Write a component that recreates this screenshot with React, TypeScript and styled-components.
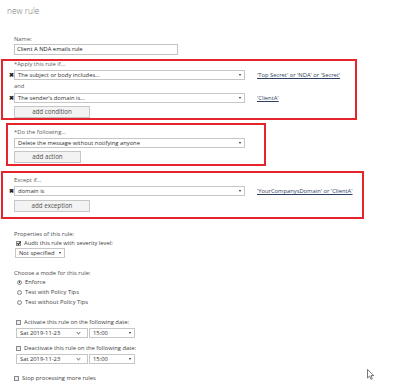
import * as React from "react";
import styled, { createGlobalStyle } from "styled-components";

const GlobalStyle = createGlobalStyle`
  html, body {
    margin: 0;
    padding: 0;
    background: #ffffff;
  }
  body {
    font-family: "Open Sans", "Noto Sans", sans-serif;
    font-size: 5.8px;
    color: #3c3c3c;
  }
`;

const Page = styled.div`
  position: relative;
  width: 400px;
  height: 386px;
  overflow: hidden;
  padding-top: 6px;
  box-sizing: border-box;
`;

const Title = styled.div`
  padding-left: 7px;
  font-size: 8.4px;
  line-height: 10px;
  color: #7a7a7a;
  font-weight: 300;
`;

const Label = styled.div<{ $top?: number }>`
  padding-left: 14px;
  margin-top: ${(p) => p.$top || 0}px;
  line-height: 8px;
  color: #5a5a5a;
`;

const TextInput = styled.div`
  margin: 1px 0 0 14px;
  width: 164px;
  height: 11px;
  box-sizing: border-box;
  border: 1px solid #c4c4c4;
  padding-left: 2px;
  line-height: 9px;
  color: #222222;
`;

const RedBox = styled.div<{ $left: number; $width: number; $top: number; $pad: number }>`
  margin: ${(p) => p.$top}px 0 0 ${(p) => p.$left}px;
  width: ${(p) => p.$width}px;
  box-sizing: border-box;
  border: 2px solid #e5242c;
  padding: 0 0 ${(p) => p.$pad}px ${(p) => 12 - p.$left}px;
`;

const BoxLabel = styled.div<{ $top?: number }>`
  margin-top: ${(p) => p.$top || 0}px;
  line-height: 7px;
  color: #5a5a5a;
`;

const CondRow = styled.div<{ $top: number }>`
  display: flex;
  align-items: center;
  margin-top: ${(p) => p.$top}px;
  margin-left: -6px;
`;

const Remove = styled.span`
  width: 6px;
  font-size: 6px;
  font-weight: 700;
  color: #222222;
  line-height: 10px;
  text-align: center;
`;

const Select = styled.div<{ $width: number; $top?: number }>`
  position: relative;
  width: ${(p) => p.$width}px;
  height: 10px;
  margin-top: ${(p) => p.$top || 0}px;
  box-sizing: border-box;
  border: 1px solid #c6c6c6;
  background: #ffffff;
  padding-left: 3px;
  line-height: 8px;
  color: #2e2e2e;
  white-space: nowrap;
`;

const Caret = styled.span`
  position: absolute;
  right: 3px;
  top: 50%;
  margin-top: -1px;
  width: 0;
  height: 0;
  border-left: 1.6px solid transparent;
  border-right: 1.6px solid transparent;
  border-top: 2.2px solid #222222;
`;

const Chevron = styled.span`
  position: absolute;
  right: 7px;
  top: 50%;
  margin-top: -2px;
  width: 2px;
  height: 2px;
  border-right: 0.8px solid #888888;
  border-bottom: 0.8px solid #888888;
  transform: rotate(45deg);
`;

const ValueLink = styled.a`
  margin-left: 12px;
  color: #2d4060;
  text-decoration: underline;
  white-space: nowrap;
`;

const Button = styled.div<{ $width: number; $top: number }>`
  margin-top: ${(p) => p.$top}px;
  width: ${(p) => p.$width}px;
  height: 12px;
  box-sizing: border-box;
  border: 1px solid #c6c6c6;
  background: #f3f3f3;
  text-align: center;
  line-height: 10px;
  font-size: 6.2px;
  color: #505050;
`;

const Section = styled.div<{ $top: number }>`
  margin-top: ${(p) => p.$top}px;
  padding-left: 14px;
`;

const Heading = styled.div<{ $top?: number }>`
  margin-top: ${(p) => p.$top || 0}px;
  line-height: 8px;
  color: #4a4a4a;
`;

const OptionRow = styled.div<{ $top: number; $indent?: number }>`
  display: flex;
  align-items: center;
  gap: 3px;
  margin-top: ${(p) => p.$top}px;
  padding-left: ${(p) => p.$indent || 0}px;
  line-height: 8px;
  color: #3c3c3c;
`;

const SeverityWrap = styled.div`
  margin-top: 1px;
  padding-left: 1px;
`;

const Check = styled.span<{ $on?: boolean }>`
  position: relative;
  width: 5px;
  height: 5px;
  box-sizing: border-box;
  border: 0.8px solid #8a8a8a;
  background: ${(p) => (p.$on ? "#f5f5f5" : "#eeeeee")};
  &::after {
    content: "";
    display: ${(p) => (p.$on ? "block" : "none")};
    position: absolute;
    left: 1.2px;
    top: -0.2px;
    width: 1.4px;
    height: 2.8px;
    border-right: 1px solid #222222;
    border-bottom: 1px solid #222222;
    transform: rotate(40deg);
  }
`;

const Radio = styled.span<{ $on?: boolean }>`
  position: relative;
  width: 5px;
  height: 5px;
  box-sizing: border-box;
  border-radius: 50%;
  border: 0.8px solid #8a8a8a;
  background: #f0f0f0;
  &::after {
    content: "";
    display: ${(p) => (p.$on ? "block" : "none")};
    position: absolute;
    left: 0.9px;
    top: 0.9px;
    width: 1.6px;
    height: 1.6px;
    border-radius: 50%;
    background: #333333;
  }
`;

const DateRow = styled.div<{ $top: number }>`
  display: flex;
  gap: 1px;
  margin-top: ${(p) => p.$top}px;
  padding-left: 2px;
`;

const Cursor = styled.svg`
  position: absolute;
  left: 367px;
  top: 369px;
`;

const conditions = [
  { text: "The subject or body includes...", value: "'Top Secret' or 'NDA' or 'Secret'" },
  { text: "The sender's domain is...", value: "'ClientA'" },
];

function DateTime({ top }: { top: number }) {
  return (
    <DateRow $top={top}>
      <Select $width={72}>
        Sat 2019-11-23
        <Chevron />
      </Select>
      <Select $width={46}>
        15:00
        <Caret />
      </Select>
    </DateRow>
  );
}

export default function App() {
  return (
    <Page>
      <GlobalStyle />
      <Title>new rule</Title>

      <Label $top={19}>Name:</Label>
      <TextInput>Client A NDA emails rule</TextInput>

      <RedBox $left={1} $width={356} $top={4} $pad={0}>
        <BoxLabel>*Apply this rule if...</BoxLabel>
        <CondRow $top={2}>
          <Remove>✖</Remove>
          <Select $width={231}>
            {conditions[0].text}
            <Caret />
          </Select>
          <ValueLink>{conditions[0].value}</ValueLink>
        </CondRow>
        <BoxLabel $top={3}>and</BoxLabel>
        <CondRow $top={3}>
          <Remove>✖</Remove>
          <Select $width={231}>
            {conditions[1].text}
            <Caret />
          </Select>
          <ValueLink>{conditions[1].value}</ValueLink>
        </CondRow>
        <Button $width={76} $top={3}>add condition</Button>
      </RedBox>

      <RedBox $left={6} $width={260} $top={3} $pad={1}>
        <BoxLabel $top={4}>*Do the following...</BoxLabel>
        <Select $width={231} $top={2}>
          Delete the message without notifying anyone
          <Caret />
        </Select>
        <Button $width={67} $top={3}>add action</Button>
      </RedBox>

      <RedBox $left={1} $width={363} $top={5} $pad={5}>
        <BoxLabel $top={4}>Except if...</BoxLabel>
        <CondRow $top={2}>
          <Remove>✖</Remove>
          <Select $width={231}>
            domain is
            <Caret />
          </Select>
          <ValueLink>'YourCompanysDomain' or 'ClientA'</ValueLink>
        </CondRow>
        <Button $width={76} $top={4}>add exception</Button>
      </RedBox>

      <Section $top={11}>
        <Heading>Properties of this rule:</Heading>
        <OptionRow $top={1} $indent={2}>
          <Check $on />
          Audit this rule with severity level:
        </OptionRow>
        <SeverityWrap>
          <Select $width={50}>
            Not specified
            <Caret />
          </Select>
        </SeverityWrap>

        <Heading $top={11}>Choose a mode for this rule:</Heading>
        <OptionRow $top={1} $indent={3}>
          <Radio $on />
          Enforce
        </OptionRow>
        <OptionRow $top={2} $indent={3}>
          <Radio />
          Test with Policy Tips
        </OptionRow>
        <OptionRow $top={2} $indent={3}>
          <Radio />
          Test without Policy Tips
        </OptionRow>

        <OptionRow $top={12} $indent={2}>
          <Check />
          Activate this rule on the following date:
        </OptionRow>
        <DateTime top={2} />
        <OptionRow $top={6} $indent={2}>
          <Check />
          Deactivate this rule on the following date:
        </OptionRow>
        <DateTime top={2} />

        <OptionRow $top={10}>
          <Check />
          Stop processing more rules
        </OptionRow>
      </Section>

      <Cursor width="8" height="11" viewBox="0 0 8 11">
        <path d="M0.5 0.5 L0.5 9 L2.6 7 L4 10.3 L5.3 9.7 L4 6.6 L6.8 6.6 Z" fill="#ffffff" stroke="#555555" strokeWidth="0.8" strokeLinejoin="round" />
      </Cursor>
    </Page>
  );
}
